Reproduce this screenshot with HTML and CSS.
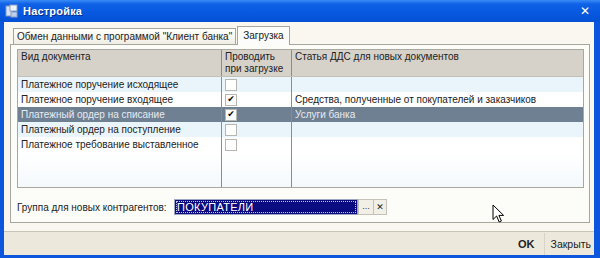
FILE: index.html
```html
<!DOCTYPE html>
<html>
<head>
<meta charset="utf-8">
<link rel="stylesheet" href="styles.css">
</head>
<body>
<div class="window">
  <div class="titlebar">
    <svg class="appicon" width="14" height="14" viewBox="0 0 14 14">
      <rect x="1" y="2" width="6" height="10" fill="#d8e4f4" stroke="#7f98c0" stroke-width="1"/>
      <rect x="5" y="1" width="7" height="6" fill="#f0f4fa" stroke="#8aa0c8" stroke-width="1"/>
      <rect x="6" y="8" width="6" height="5" fill="#c0d0e8" stroke="#8aa0c8" stroke-width="1"/>
    </svg>
    <span class="title">Настройка</span>
    <span class="close">✕</span>
  </div>
  <div class="client">
    <div class="content">
      <div class="tabs">
        <div class="tab">Обмен данными с программой "Клиент банка"</div>
        <div class="tab active">Загрузка</div>
      </div>
      <div class="panel">
        <div class="grid">
          <div class="row head">
            <div class="c1">Вид документа</div>
            <div class="c2">Проводить<br>при загрузке</div>
            <div class="c3">Статья ДДС для новых документов</div>
          </div>
          <div class="row alt">
            <div class="c1">Платежное поручение исходящее</div>
            <div class="c2"><span class="cb"></span></div>
            <div class="c3"></div>
          </div>
          <div class="row">
            <div class="c1">Платежное поручение входящее</div>
            <div class="c2"><span class="cb on">✔</span></div>
            <div class="c3">Средства, полученные от покупателей и заказчиков</div>
          </div>
          <div class="row sel">
            <div class="c1">Платежный ордер на списание</div>
            <div class="c2"><span class="cb on">✔</span></div>
            <div class="c3">Услуги банка</div>
          </div>
          <div class="row alt">
            <div class="c1">Платежный ордер на поступление</div>
            <div class="c2"><span class="cb"></span></div>
            <div class="c3"></div>
          </div>
          <div class="row">
            <div class="c1">Платежное требование выставленное</div>
            <div class="c2"><span class="cb"></span></div>
            <div class="c3"></div>
          </div>
          <div class="row filler">
            <div class="c1"></div>
            <div class="c2"></div>
            <div class="c3"></div>
          </div>
        </div>
        <div class="group">
          <span class="label">Группа для новых контрагентов:</span>
          <div class="field">
            <div class="value"><span>ПОКУПАТЕЛИ</span></div>
            <span class="btn dots">...</span>
            <span class="btn x">✕</span>
          </div>
        </div>
        <svg class="cursor" width="14" height="20" viewBox="0 0 14 20">
          <path d="M1 1 L1 15.5 L4.6 12 L7.2 18 L9.4 17 L6.9 11.4 L11.6 11.4 Z" fill="#fff" stroke="#000" stroke-width="1" stroke-linejoin="round"/>
        </svg>
      </div>
    </div>
    <div class="footer">
      <span class="ok">OK</span>
      <span class="sep"></span>
      <span class="closebtn">Закрыть</span>
    </div>
  </div>
</div>
</body>
</html>
```

FILE: styles.css
```css
* { box-sizing: border-box; }
html, body { margin: 0; padding: 0; }
body {
  width: 600px;
  height: 258px;
  overflow: hidden;
  font-family: "Liberation Sans", Arial, sans-serif;
  font-size: 10px;
  color: #222;
}
.window {
  width: 600px;
  height: 258px;
  display: flex;
  flex-direction: column;
  background: #0b56dc;
  padding: 0 6px 4px 4px;
}
.titlebar {
  height: 22px;
  flex: none;
  display: flex;
  align-items: center;
  margin: 0 -6px 0 -4px;
  padding: 0 10px 0 5px;
  background: linear-gradient(#3a8cf6 0%, #0f62e6 18%, #0758e0 60%, #0550d4 100%);
  color: #fff;
}
.appicon { margin-right: 4px; }
.title {
  font-weight: bold;
  font-size: 11px;
  letter-spacing: 0.2px;
  text-shadow: 1px 1px 0 #0a2d8c;
  flex: 1;
}
.close {
  font-family: "DejaVu Sans", sans-serif;
  font-size: 12px;
  font-weight: bold;
  color: #fff;
}
.client {
  flex: 1;
  display: flex;
  flex-direction: column;
  background: #f9f7ef;
}
.content {
  flex: 1;
  padding: 4px 0 0 6px;
  display: flex;
  flex-direction: column;
}
.tabs {
  display: flex;
  height: 18px;
  padding-left: 3px;
  align-items: flex-end;
}
.tab {
  height: 16px;
  padding: 0 3px;
  line-height: 15px;
  border: 1px solid #a7a69c;
  border-bottom: none;
  background: linear-gradient(#fffffb, #efede4);
  font-size: 10px;
  color: #222;
  position: relative;
  z-index: 0;
}
.tab.active {
  height: 19px;
  padding: 0 5px;
  line-height: 17px;
  background: #fcfcfa;
  margin-left: 1px;
  z-index: 2;
  margin-bottom: -1px;
}
.panel {
  width: 580px;
  height: 179px;
  border: 1px solid #a7a69c;
  background: #fcfcf8;
  padding: 4px 6px 0 6px;
  position: relative;
  z-index: 1;
}
.grid {
  border: 1px solid #a9a89e;
  height: 139px;
  display: flex;
  flex-direction: column;
  background: #fff;
  width: 567px;
}
.row {
  display: flex;
  height: 15px;
  line-height: 15px;
  font-size: 10px;
  flex: none;
}
.row > div { overflow: hidden; white-space: nowrap; }
.c1 { width: 204px; padding-left: 3px; border-right: 1px solid #8c8c8c; }
.c2 { width: 70px; padding-left: 3px; border-right: 1px solid #8c8c8c; display: flex; align-items: center; }
.c3 { flex: 1; padding-left: 3px; }
.row.head {
  height: 27px;
  line-height: 12px;
  background: #d6d2ca;
  border-bottom: 1px solid #c2c0b8;
}
.row.head > div { padding-top: 1px; }
.row.head .c2 { display: block; }
.row.alt { background: #eaf5fb; }
.row.sel { background: #6f8092; color: #e6ecf2; }
.row.filler { flex: 1; background: linear-gradient(#fff 0%, #f4f9fc 100%); }
.cb {
  width: 12px;
  height: 12px;
  border: 1px solid #b7b7b0;
  background: #fff;
  display: inline-flex;
  align-items: center;
  justify-content: center;
  font-family: "DejaVu Sans", sans-serif;
  font-size: 9px;
  line-height: 1;
  color: #000;
}
.group {
  display: flex;
  align-items: center;
  height: 36px;
  padding-top: 2px;
}
.label {
  width: 157px;
  white-space: nowrap;
  font-size: 10px;
}
.field { display: flex; height: 16px; }
.value {
  width: 184px;
  background: #0c0c82;
  border: 1px solid #9fa6c4;
  padding: 1px;
}
.value span {
  display: block;
  height: 100%;
  outline: 1px dotted #c6c6e6;
  outline-offset: -1px;
  color: #fff;
  font-size: 11px;
  line-height: 12px;
  padding-left: 1px;
  letter-spacing: 0.3px;
}
.btn {
  width: 14px;
  height: 16px;
  border: 1px solid #c4c2b8;
  background: #f2f0e6;
  font-size: 9px;
  display: flex;
  align-items: center;
  justify-content: center;
  color: #333;
}
.btn.dots { width: 15px; border-right: none; align-items: flex-end; padding-bottom: 3px; }
.btn.x { font-family: "DejaVu Sans", sans-serif; font-weight: bold; font-size: 9px; color: #222; }
.cursor {
  position: absolute;
  left: 481px;
  top: 159px;
}
.footer {
  height: 24px;
  flex: none;
  border-top: 1px solid #c8c5b8;
  background: #ece9dc;
  display: flex;
  align-items: center;
  justify-content: flex-end;
  padding-right: 3px;
  margin-top: 8px;
}
.ok {
  font-weight: bold;
  font-size: 11px;
  margin-right: 9px;
}
.sep {
  width: 1px;
  height: 22px;
  background: #d6d3c8;
  margin-right: 6px;
}
.closebtn {
  font-size: 10.5px;
}
```
